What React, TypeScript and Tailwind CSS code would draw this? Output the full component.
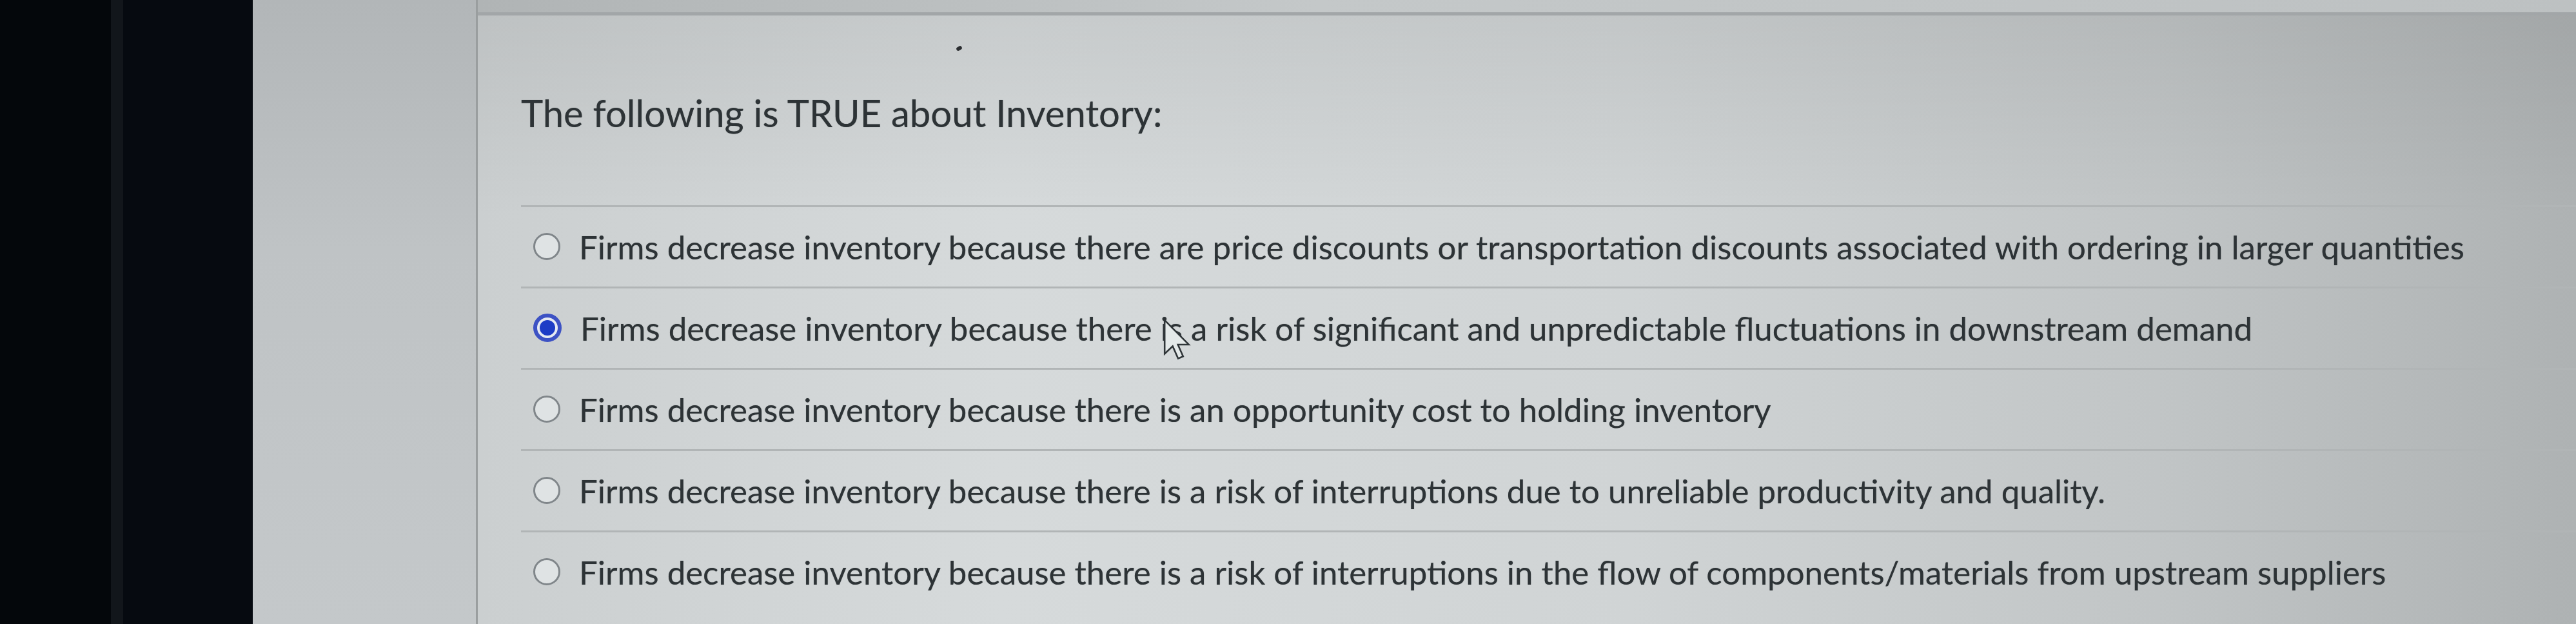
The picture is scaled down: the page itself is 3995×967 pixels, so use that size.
import React from "react";

const options = [
  "Firms decrease inventory because there are price discounts or transportation discounts associated with ordering in larger quantities",
  "Firms decrease inventory because there is a risk of significant and unpredictable fluctuations in downstream demand",
  "Firms decrease inventory because there is an opportunity cost to holding inventory",
  "Firms decrease inventory because there is a risk of interruptions due to unreliable productivity and quality.",
  "Firms decrease inventory because there is a risk of interruptions in the flow of components/materials from upstream suppliers",
];

function Radio({ checked }: { checked: boolean }) {
  if (checked) {
    return (
      <span className="flex h-[44px] w-[44px] shrink-0 items-center justify-center rounded-full border-[6px] border-[#3d52c4] bg-[#e6eaf2]">
        <span className="h-[24px] w-[24px] rounded-full bg-[#1d3cc6]" />
      </span>
    );
  }
  return (
    <span className="h-[42px] w-[42px] shrink-0 rounded-full border-[3px] border-[#80868a] bg-[#dfe3e4]" />
  );
}

function Cursor() {
  return (
    <svg
      className="absolute left-[1804px] top-[494px]"
      width="44"
      height="66"
      viewBox="0 0 12 18"
    >
      <path
        d="M0.6 0.6 L0.6 14.8 L4 11.6 L6.3 16.8 L8.4 15.9 L6.2 10.9 L10.8 10.9 Z"
        fill="#e4e9e9"
        stroke="#2f3538"
        strokeWidth="0.7"
        strokeLinejoin="miter"
      />
    </svg>
  );
}

export default function App() {
  return (
    <div
      className="relative flex h-[967px] w-[3995px] overflow-hidden"
      style={{ fontFamily: "Lato, 'Open Sans', sans-serif" }}
    >
      <div className="w-[172px] shrink-0 bg-[#04070b]" />
      <div className="w-[19px] shrink-0 bg-[#12161b]" />
      <div className="w-[201px] shrink-0 bg-[#060a10]" />
      <div className="w-[346px] shrink-0 bg-[linear-gradient(to_bottom,#b2b6b8,#bfc3c5_40%,#c4c8ca)]" />
      <div className="w-[3px] shrink-0 bg-[#9a9e9f]" />
      <div className="flex flex-1 flex-col bg-[linear-gradient(to_bottom,rgba(0,0,0,0.07),rgba(0,0,0,0)_35%),linear-gradient(to_right,#cbcfd0,#d6dadb_25%,#d0d4d5_55%,#c1c5c6_80%,#aeb2b3)]">
        <div className="h-[24px] shrink-0 border-b-[5px] border-[#a2a6a8] bg-[linear-gradient(to_right,#b0b4b5,#c4c8c9_40%,#bdc1c2)]" />
        <div className="flex flex-col pl-[67px]">
          <h1 className="mt-[116px] text-[58px] leading-[1.2] font-normal text-[#2d3336] [text-shadow:0_0_1px_rgba(40,45,48,0.5)]">
            The following is TRUE about Inventory:
          </h1>
          <div className="mt-[108px] flex flex-col">
            {options.map((o, i) => (
              <div
                key={i}
                className="flex h-[126px] items-center gap-[29px] border-t-[3px] border-[#b1b5b6] pl-[19px]"
              >
                <Radio checked={i === 1} />
                <span className="text-[51px] leading-[1.2] whitespace-nowrap text-[#2d3336] [text-shadow:0_0_1px_rgba(40,45,48,0.5)]">
                  {o}
                </span>
              </div>
            ))}
          </div>
        </div>
      </div>
      <span className="absolute left-[1483px] top-[72px] h-[6px] w-[9px] rotate-[-30deg] rounded-full bg-[#2a2d30]" />
      <Cursor />
    </div>
  );
}
